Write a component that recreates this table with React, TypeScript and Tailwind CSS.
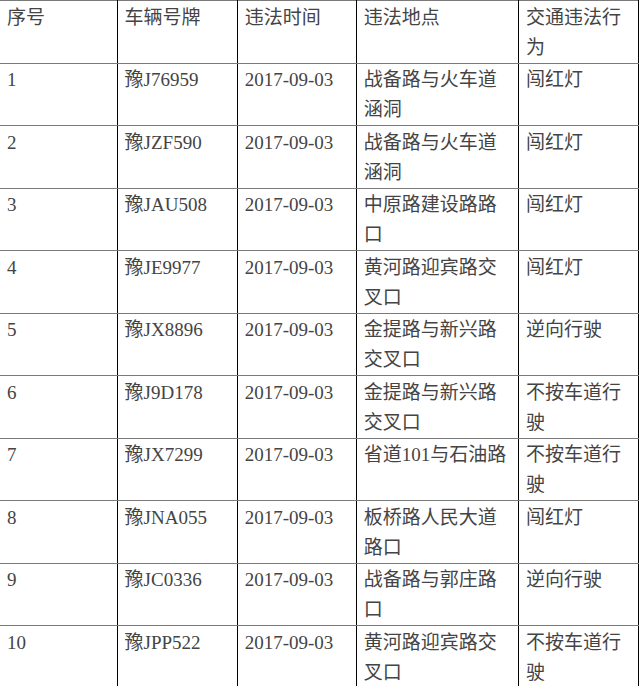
const rows = [
  ["1", "豫J76959", "2017-09-03", "战备路与火车道涵洞", "闯红灯"],
  ["2", "豫JZF590", "2017-09-03", "战备路与火车道涵洞", "闯红灯"],
  ["3", "豫JAU508", "2017-09-03", "中原路建设路路口", "闯红灯"],
  ["4", "豫JE9977", "2017-09-03", "黄河路迎宾路交叉口", "闯红灯"],
  ["5", "豫JX8896", "2017-09-03", "金提路与新兴路交叉口", "逆向行驶"],
  ["6", "豫J9D178", "2017-09-03", "金提路与新兴路交叉口", "不按车道行驶"],
  ["7", "豫JX7299", "2017-09-03", "省道101与石油路", "不按车道行驶"],
  ["8", "豫JNA055", "2017-09-03", "板桥路人民大道路口", "闯红灯"],
  ["9", "豫JC0336", "2017-09-03", "战备路与郭庄路口", "逆向行驶"],
  ["10", "豫JPP522", "2017-09-03", "黄河路迎宾路交叉口", "不按车道行驶"],
];

const headers = ["序号", "车辆号牌", "违法时间", "违法地点", "交通违法行为"];
const widths = ["w-[117px]", "w-[120px]", "w-[119px]", "w-[162px]", "w-[120px]"];

function Cell({ text, idx }: { text: string; idx: number }) {
  return (
    <td
      className={`${widths[idx]} align-top border-t border-b border-t-[#7a7a7a] border-b-[#7a7a7a] border-r border-r-black px-[7px] pt-[1.5px] pb-0 leading-[30px] h-[62.4px] break-all`}
    >
      {text}
    </td>
  );
}

export default function App() {
  return (
    <div
      className="w-[640px] h-[686px] overflow-hidden bg-white text-[#444] text-[19px]"
      style={{ fontFamily: '"Liberation Serif", "Noto Sans CJK SC", serif' }}
    >
      <table className="table-fixed border-collapse w-[639px]">
        <tbody>
          <tr>
            {headers.map((h, i) => (
              <Cell key={i} text={h} idx={i} />
            ))}
          </tr>
          {rows.map((r, ri) => (
            <tr key={ri}>
              {r.map((c, i) => (
                <Cell key={i} text={c} idx={i} />
              ))}
            </tr>
          ))}
        </tbody>
      </table>
    </div>
  );
}
